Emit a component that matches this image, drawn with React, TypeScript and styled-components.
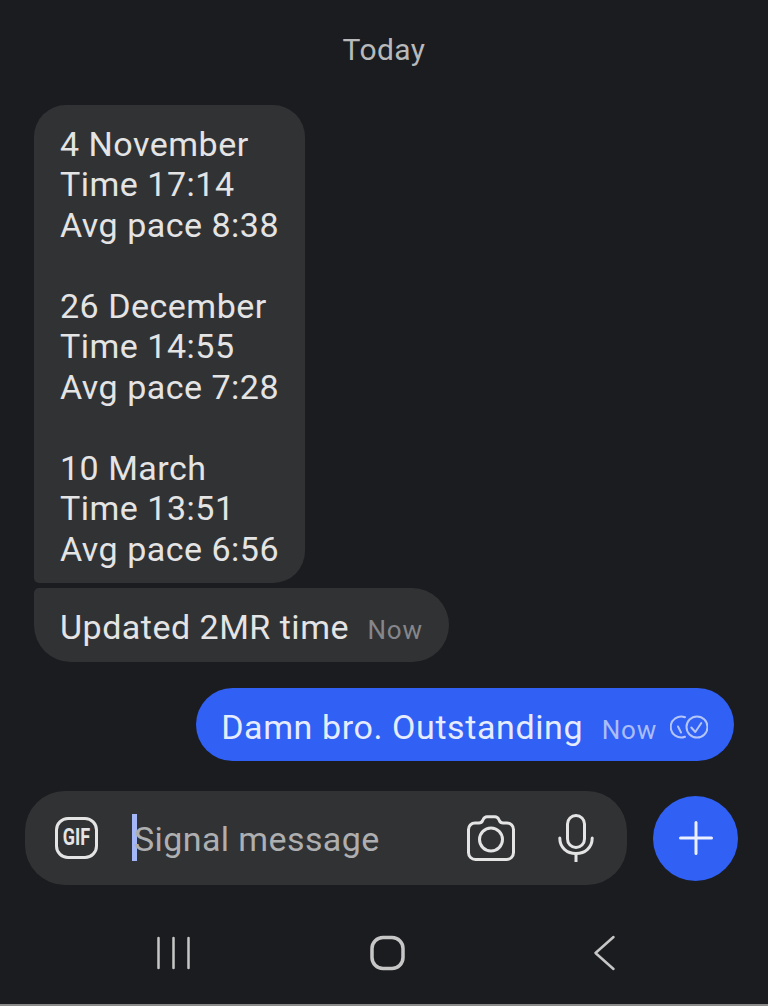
import React from 'react';
import styled, { createGlobalStyle } from 'styled-components';

const GlobalStyle = createGlobalStyle`
  html, body {
    margin: 0;
    padding: 0;
    background: #1b1c1f;
  }
`;

const Screen = styled.div`
  width: 768px;
  height: 1006px;
  box-sizing: border-box;
  display: flex;
  flex-direction: column;
  overflow: hidden;
  background: #1b1c1f;
  border-bottom: 2px solid #8b8b8b;
  font-family: Roboto, 'Noto Sans', sans-serif;
`;

const DateLabel = styled.div`
  height: 105px;
  padding-top: 32px;
  box-sizing: border-box;
  text-align: center;
  font-size: 30px;
  line-height: 36px;
  letter-spacing: 0.4px;
  color: #b8b9bb;
`;

const Thread = styled.div`
  display: flex;
  flex-direction: column;
  padding: 0 34px;
`;

const Bubble = styled.div<{ $outgoing?: boolean }>`
  display: flex;
  align-items: baseline;
  align-self: ${(props) => (props.$outgoing ? 'flex-end' : 'flex-start')};
  box-sizing: border-box;
  padding: 0 26px;
  background: ${(props) => (props.$outgoing ? '#3060f4' : '#313234')};
  color: ${(props) => (props.$outgoing ? '#e6ecff' : '#e4e4e4')};
  font-size: 34px;
  line-height: 40.5px;
  letter-spacing: ${(props) => (props.$outgoing ? '0.6px' : '0.5px')};
`;

const StatsBubble = styled(Bubble)`
  padding-top: 18.6px;
  padding-bottom: 13.9px;
  border-radius: 32px 32px 32px 5px;
  white-space: pre-line;
`;

const UpdateBubble = styled(Bubble)`
  height: 74px;
  margin-top: 5px;
  padding-top: 19px;
  border-radius: 5px 37px 37px 37px;
`;

const SentBubble = styled(Bubble)`
  height: 73px;
  margin-top: 26px;
  padding-top: 19px;
  padding-left: 25px;
  border-radius: 37px;
`;

const Stamp = styled.span<{ $outgoing?: boolean }>`
  margin-left: 18.5px;
  font-size: 26px;
  letter-spacing: 0.8px;
  color: ${(props) => (props.$outgoing ? '#aabdf8' : '#85868a')};
`;

const TickIcon = styled.svg`
  width: 38px;
  height: 26px;
  margin-left: 13px;
  margin-right: 0;
  align-self: center;
  margin-top: -14px;
`;

const Composer = styled.div`
  display: flex;
  align-items: center;
  gap: 26px;
  margin-top: 30px;
  padding-left: 25px;
`;

const InputPill = styled.div`
  width: 602px;
  height: 94px;
  box-sizing: border-box;
  display: flex;
  align-items: center;
  padding-left: 30px;
  background: #313234;
  border-radius: 40px;
`;

const GifBadge = styled.div`
  width: 43px;
  height: 42px;
  box-sizing: border-box;
  display: flex;
  align-items: center;
  justify-content: center;
  border: 3px solid #e4e4e4;
  border-radius: 13px;
  color: #e4e4e4;
`;

const GifLabel = styled.span`
  display: block;
  font-family: Roboto, sans-serif;
  font-size: 23px;
  line-height: 1;
  font-weight: 700;
  letter-spacing: 0;
  transform: scaleX(0.78);
`;

const Caret = styled.div`
  width: 5px;
  height: 47px;
  margin-left: 34px;
  background: #a3b6f7;
`;

const Placeholder = styled.div`
  flex: 1;
  margin-left: -3px;
  padding-top: 3px;
  font-size: 34px;
  letter-spacing: 0.4px;
  color: #aeafb1;
`;

const CameraIcon = styled.svg`
  width: 48px;
  height: 46px;
  margin-right: 43px;
`;

const MicIcon = styled.svg`
  width: 36px;
  height: 48px;
  margin-right: 33px;
`;

const AddButton = styled.button`
  width: 85px;
  height: 85px;
  margin-top: 1px;
  padding: 0;
  display: flex;
  align-items: center;
  justify-content: center;
  border: none;
  border-radius: 50%;
  background: #3060f4;
`;

const NavBar = styled.div`
  display: grid;
  grid-template-columns: repeat(3, 215.5px);
  justify-content: center;
  justify-items: center;
  margin-top: 50px;
  padding-left: 8px;
`;

const NavIcon = styled.svg`
  width: 36px;
  height: 36px;
`;

const stats = `4 November
Time 17:14
Avg pace 8:38

26 December
Time 14:55
Avg pace 7:28

10 March
Time 13:51
Avg pace 6:56`;

const App: React.FC = () => {
  return (
    <Screen>
      <GlobalStyle />
      <DateLabel>Today</DateLabel>
      <Thread>
        <StatsBubble>{stats}</StatsBubble>
        <UpdateBubble>
          Updated 2MR time<Stamp>Now</Stamp>
        </UpdateBubble>
        <SentBubble $outgoing>
          Damn bro. Outstanding<Stamp $outgoing>Now</Stamp>
          <TickIcon viewBox="0 0 38 26" fill="none" stroke="#b4c6f9" strokeWidth="2">
            <path d="M15 3.200A10.500 10.500 0 1 0 15 22.800" strokeLinecap="round" />
            <path d="M8 12.500l3 6" strokeLinecap="round" />
            <circle cx="27" cy="13" r="10.500" />
            <path d="M21.300 13.500l4 4.500 6-9" strokeLinecap="round" strokeLinejoin="round" />
          </TickIcon>
        </SentBubble>
      </Thread>
      <Composer>
        <InputPill>
          <GifBadge>
            <GifLabel>GIF</GifLabel>
          </GifBadge>
          <Caret />
          <Placeholder>Signal message</Placeholder>
          <CameraIcon viewBox="0 0 48 46" fill="none" stroke="#e4e4e4" strokeWidth="3">
            <path d="M8 8h4c2 0 3-1 3.600-2.400l.6-1.200C17 2.700 18 1.700 20 1.700h8c2 0 3 1 3.800 2.700l.6 1.200C33 7 34 8 36 8h4a6.500 6.500 0 0 1 6.500 6.500v23A7 7 0 0 1 39.500 44.500h-31A7 7 0 0 1 1.500 37.500v-23A6.500 6.500 0 0 1 8 8z" strokeLinejoin="round" />
            <circle cx="24" cy="24.500" r="11.500" />
          </CameraIcon>
          <MicIcon viewBox="0 0 36 48" fill="none" stroke="#e4e4e4" strokeWidth="3">
            <rect x="9.500" y="1.500" width="17" height="32" rx="8.500" />
            <path d="M1.800 24c0 9.500 7 15.500 16.200 15.500S34.200 33.500 34.200 24" strokeLinecap="round" />
            <path d="M18 39.500V48" />
          </MicIcon>
        </InputPill>
        <AddButton aria-label="Add">
          <svg width="34" height="34" viewBox="0 0 34 34" fill="none" stroke="#eaf0ff" strokeWidth="3" strokeLinecap="round">
            <path d="M17 1.500v31M1.500 17h31" />
          </svg>
        </AddButton>
      </Composer>
      <NavBar>
        <NavIcon viewBox="0 0 36 36" fill="none" stroke="#c6c6c6" strokeWidth="2.500" strokeLinecap="round">
          <path d="M3.500 3v30M18.500 3v30M33.500 3v30" />
        </NavIcon>
        <NavIcon viewBox="0 0 36 36" fill="none" stroke="#c6c6c6" strokeWidth="3.500">
          <rect x="2" y="2.500" width="31" height="31" rx="11" />
        </NavIcon>
        <NavIcon viewBox="0 0 36 36" fill="none" stroke="#c6c6c6" strokeWidth="2.500" strokeLinecap="round" strokeLinejoin="round">
          <path d="M27.500 2L9.500 18l18 16" />
        </NavIcon>
      </NavBar>
    </Screen>
  );
};

export default App;
